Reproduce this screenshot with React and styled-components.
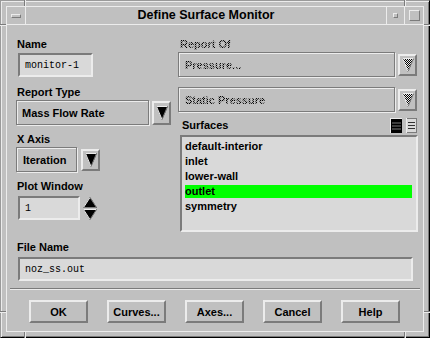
import React from "react";
import styled, { createGlobalStyle } from "styled-components";

const FACE = "#c0c0c0";
const FIELD = "#d9d9d9";
const LIGHT = "#ececec";
const DARK = "#7b7b7b";

const GlobalStyle = createGlobalStyle`
  html, body {
    margin: 0;
    padding: 0;
    background: ${FACE};
  }
  body {
    font-family: "Liberation Sans", Arial, sans-serif;
    color: #000;
  }
`;

const Window = styled.div`
  position: relative;
  width: 430px;
  height: 338px;
  box-sizing: border-box;
  background: ${FACE};
  border: 1px solid;
  border-color: #9a9a9a #000 #000 #9a9a9a;
  box-shadow: inset 1px 1px 0 ${LIGHT}, inset -1px -1px 0 ${DARK};
  padding: 5px;
  display: flex;
`;

// little grooves cut into the wm frame (resize handle marks)
const Notch = styled.span`
  position: absolute;
  left: ${(p) => p.$x - 1}px;
  top: ${(p) => p.$y - 1}px;
  width: ${(p) => (p.$v ? 1 : 6)}px;
  height: ${(p) => (p.$v ? 6 : 1)}px;
  background: ${LIGHT};
  box-shadow: ${(p) => (p.$v ? `-1px 0 0 ${DARK}` : `0 -1px 0 ${DARK}`)};
`;

const Frame = styled.div`
  flex: 1;
  display: flex;
  flex-direction: column;
  border: 1px solid ${LIGHT};
`;

const TitleBar = styled.div`
  height: 17px;
  display: flex;
  border-bottom: 1px solid ${LIGHT};
`;

const TitleCell = styled.div`
  width: ${(p) => (p.$w ? `${p.$w}px` : "auto")};
  flex: ${(p) => (p.$w ? "none" : 1)};
  display: flex;
  align-items: center;
  justify-content: center;
  border-left: ${(p) => (p.$sep ? `1px solid ${LIGHT}` : "none")};
`;

const TitleText = styled.span`
  font-size: 12.5px;
  font-weight: bold;
  line-height: 15px;
`;

const Bump = styled.div`
  width: ${(p) => p.$w}px;
  height: ${(p) => p.$h}px;
  box-sizing: border-box;
  border: 1px solid;
  border-color: ${LIGHT} ${DARK} ${DARK} ${LIGHT};
`;

const Content = styled.div`
  flex: 1;
  display: flex;
  flex-direction: column;
  padding: 13px 0 0 9px;
`;

const Columns = styled.div`
  display: flex;
  gap: 6px;
`;

const Col = styled.div`
  width: ${(p) => p.$w}px;
  display: flex;
  flex-direction: column;
`;

const Label = styled.div`
  font-size: 11px;
  font-weight: bold;
  line-height: 13px;
  height: 13px;
  margin: ${(p) => p.$mt || 0}px 0 0 ${(p) => p.$ml ?? 1}px;
  white-space: nowrap;
`;

const Stipple = styled.span`
  background: repeating-conic-gradient(#000 0 25%, #a4a4a4 0 50%) 0 0 / 2px 2px;
  -webkit-background-clip: text;
  background-clip: text;
  color: transparent;
`;

const TextField = styled.div`
  width: ${(p) => p.$w}px;
  height: 24px;
  box-sizing: border-box;
  margin: ${(p) => p.$mt || 0}px 0 0 2px;
  border: 2px solid;
  border-color: ${DARK} ${LIGHT} ${LIGHT} ${DARK};
  background: ${FIELD};
  display: flex;
  align-items: center;
  padding-left: 5px;
  font-family: "Liberation Mono", "DejaVu Sans Mono", monospace;
  font-size: 10px;
`;

const Row = styled.div`
  display: flex;
  align-items: center;
  gap: ${(p) => p.$gap || 3}px;
  margin-top: ${(p) => p.$mt || 0}px;
  margin-left: ${(p) => p.$ml || 0}px;
`;

const OptionBox = styled.div`
  width: ${(p) => p.$w}px;
  height: 25px;
  box-sizing: border-box;
  border: 1px solid ${DARK};
  box-shadow: inset 1px 1px 0 ${LIGHT}, 1px 1px 0 ${LIGHT};
  display: flex;
  align-items: center;
  padding-left: ${(p) => p.$pl || 5}px;
  font-size: 11px;
  font-weight: bold;
  white-space: nowrap;
`;

const ArrowBtn = styled.div`
  width: ${(p) => p.$w || 19}px;
  height: ${(p) => p.$h || 24}px;
  box-sizing: border-box;
  border: 2px solid;
  border-color: ${LIGHT} ${DARK} ${DARK} ${LIGHT};
  display: flex;
  align-items: center;
  justify-content: center;
`;

const Spinner = styled.svg`
  display: block;
  margin-left: 1px;
`;

const SurfHeader = styled.div`
  display: flex;
  align-items: center;
  justify-content: space-between;
  height: 15px;
  margin-top: 6px;
`;

const IconPair = styled.div`
  display: flex;
  gap: 4px;
`;

const ListBox = styled.div`
  width: 238px;
  height: 97px;
  box-sizing: border-box;
  margin: 2px 0 0 2px;
  border: 2px solid;
  border-color: ${DARK} ${LIGHT} ${LIGHT} ${DARK};
  background: ${FIELD};
  padding: 3px 4px 0 3px;
`;

const Item = styled.div`
  height: 13px;
  line-height: 13px;
  margin-bottom: 2px;
  font-size: 11px;
  font-weight: bold;
  background: ${(p) => (p.$sel ? "#00ff00" : "transparent")};
`;

const Separator = styled.div`
  width: 410px;
  margin: 7px 0 0 -6px;
  border-top: 1px solid ${DARK};
  border-bottom: 1px solid ${LIGHT};
`;

const ButtonRow = styled.div`
  display: flex;
  gap: 19px;
  margin: 10px 0 0 13px;
`;

const Button = styled.div`
  width: 59px;
  height: 23px;
  box-sizing: border-box;
  border: 2px solid;
  border-color: ${LIGHT} ${DARK} ${DARK} ${LIGHT};
  display: flex;
  align-items: center;
  justify-content: center;
  font-size: 11px;
  font-weight: bold;
`;

function DownTri({ disabled }) {
  return (
    <svg width="12" height="14" viewBox="0 0 12 14">
      <defs>
        <pattern id="chk" width="2" height="2" patternUnits="userSpaceOnUse">
          <rect width="2" height="2" fill={LIGHT} />
          <rect width="1" height="1" fill="#000" />
          <rect x="1" y="1" width="1" height="1" fill="#000" />
        </pattern>
      </defs>
      <polygon points="0,0 12,0 6,14" fill={disabled ? "url(#chk)" : "#000"} />
      <polyline points="0.5,0.5 11.5,0.5" stroke={LIGHT} strokeWidth="1" fill="none" />
      <polyline points="0.5,0.5 6,13.5" stroke={LIGHT} strokeWidth="1" fill="none" />
      <polyline points="11.5,0.5 6,13.5" stroke={DARK} strokeWidth="1" fill="none" />
    </svg>
  );
}

function SelectAllIcon() {
  return (
    <svg width="12" height="15" viewBox="0 0 12 15">
      <rect x="0" y="0" width="12" height="15" fill="#000" />
      <rect x="0" y="0" width="1" height="15" fill={LIGHT} />
      <rect x="0" y="0" width="12" height="1" fill={LIGHT} />
      <rect x="2" y="4.5" width="9" height="1" fill={DARK} />
      <rect x="2" y="7.5" width="9" height="1" fill={DARK} />
      <rect x="2" y="10.5" width="9" height="1" fill={DARK} />
    </svg>
  );
}

function DeselectIcon() {
  return (
    <svg width="11" height="15" viewBox="0 0 11 15">
      <rect x="0.5" y="0.5" width="10" height="14" fill={FIELD} stroke={DARK} />
      <rect x="0" y="0" width="1" height="15" fill={LIGHT} />
      <rect x="2" y="4" width="7" height="1" fill="#333" />
      <rect x="2" y="7" width="7" height="1" fill="#333" />
      <rect x="2" y="10" width="7" height="1" fill="#333" />
    </svg>
  );
}

const surfaces = ["default-interior", "inlet", "lower-wall", "outlet", "symmetry"];
const buttons = ["OK", "Curves...", "Axes...", "Cancel", "Help"];

export default function App() {
  return (
    <>
      <GlobalStyle />
      <Window>
        <Notch $v $x={25} $y={0} />
        <Notch $v $x={405} $y={0} />
        <Notch $x={0} $y={25} />
        <Notch $x={424} $y={25} />
        <Notch $x={0} $y={312} />
        <Notch $x={424} $y={312} />
        <Notch $v $x={25} $y={332} />
        <Notch $v $x={405} $y={332} />
        <Frame>
          <TitleBar>
            <TitleCell $w={18}>
              <Bump $w={10} $h={4} />
            </TitleCell>
            <TitleCell $sep>
              <TitleText>Define Surface Monitor</TitleText>
            </TitleCell>
            <TitleCell $sep $w={17}>
              <Bump $w={5} $h={5} />
            </TitleCell>
            <TitleCell $sep $w={18}>
              <Bump $w={11} $h={11} />
            </TitleCell>
          </TitleBar>

          <Content>
            <Columns>
              <Col $w={156}>
                <Label>Name</Label>
                <TextField $w={75} $mt={2}>monitor-1</TextField>

                <Label $mt={9}>Report Type</Label>
                <Row $mt={1}>
                  <OptionBox $w={133}>Mass Flow Rate</OptionBox>
                  <ArrowBtn>
                    <DownTri />
                  </ArrowBtn>
                </Row>

                <Label $mt={8}>X Axis</Label>
                <Row $mt={1} $gap={4}>
                  <OptionBox $w={61} $pl={6}>Iteration</OptionBox>
                  <ArrowBtn $h={22}>
                    <DownTri />
                  </ArrowBtn>
                </Row>

                <Label $mt={8}>Plot Window</Label>
                <Row $mt={3} $gap={2}>
                  <TextField $w={62}>1</TextField>
                  <Spinner width="14" height="23" viewBox="0 0 14 23">
                    <polygon points="7,0 14,11 0,11" fill="#000" />
                    <polyline points="0.5,10.5 7,0.5" stroke={LIGHT} fill="none" />
                    <polyline points="7,0.5 13.5,10.5 0.5,10.5" stroke={DARK} fill="none" />
                    <polygon points="0,12 14,12 7,23" fill="#000" />
                    <polyline points="0.5,12.5 13.5,12.5" stroke={LIGHT} fill="none" />
                    <polyline points="0.5,12.5 7,22.5" stroke={LIGHT} fill="none" />
                    <polyline points="13.5,12.5 7,22.5" stroke={DARK} fill="none" />
                  </Spinner>
                </Row>
              </Col>

              <Col $w={239}>
                <Label $ml={2}>
                  <Stipple>Report Of</Stipple>
                </Label>
                <Row $mt={1}>
                  <OptionBox $w={217} $pl={6}>
                    <Stipple>Pressure...</Stipple>
                  </OptionBox>
                  <ArrowBtn $h={22}>
                    <DownTri disabled />
                  </ArrowBtn>
                </Row>
                <Row $mt={10}>
                  <OptionBox $w={217} $pl={6}>
                    <Stipple>Static Pressure</Stipple>
                  </OptionBox>
                  <ArrowBtn $h={22}>
                    <DownTri disabled />
                  </ArrowBtn>
                </Row>

                <SurfHeader>
                  <Label $ml={4}>Surfaces</Label>
                  <IconPair>
                    <SelectAllIcon />
                    <DeselectIcon />
                  </IconPair>
                </SurfHeader>
                <ListBox>
                  {surfaces.map((s) => (
                    <Item key={s} $sel={s === "outlet"}>
                      {s}
                    </Item>
                  ))}
                </ListBox>
              </Col>
            </Columns>

            <Label $mt={9}>File Name</Label>
            <TextField $w={395} $mt={3}>noz_ss.out</TextField>

            <Separator />

            <ButtonRow>
              {buttons.map((b) => (
                <Button key={b}>{b}</Button>
              ))}
            </ButtonRow>
          </Content>
        </Frame>
      </Window>
    </>
  );
}
